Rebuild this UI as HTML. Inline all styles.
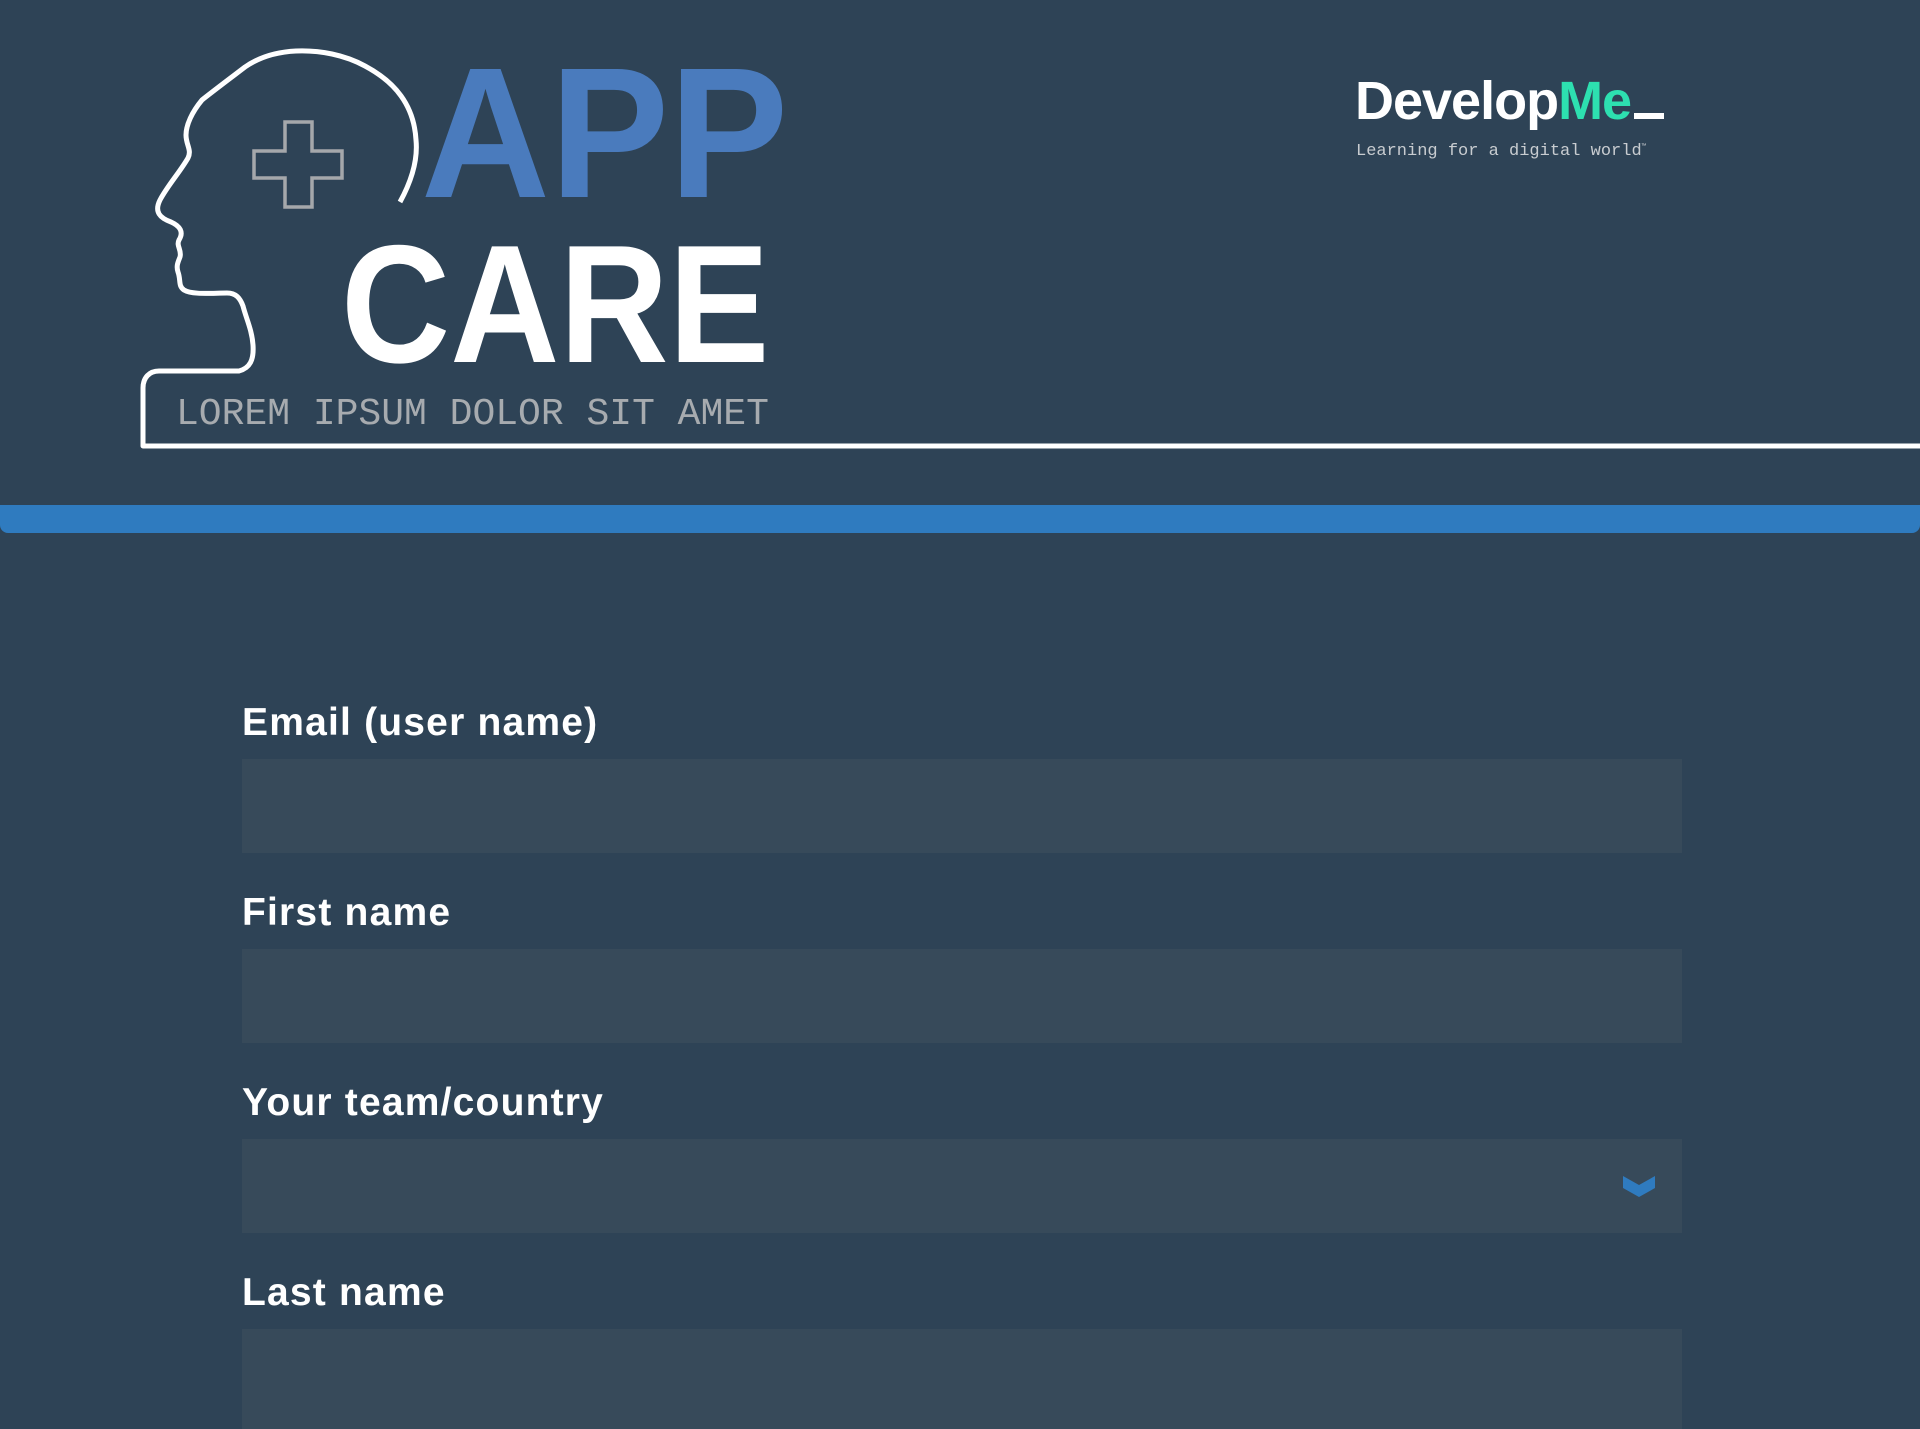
<!DOCTYPE html>
<html><head><meta charset="utf-8"><style>
*{margin:0;padding:0;box-sizing:border-box}
html,body{width:1920px;height:1419px;overflow:hidden;background:#2e4356;font-family:"Liberation Sans",sans-serif}
.abs{position:absolute}
.big{font-weight:bold;line-height:1;transform-origin:0 0;white-space:nowrap}
label{position:absolute;left:242px;color:#fff;font-weight:bold;font-size:39px;letter-spacing:1.2px;line-height:1}
.inp{position:absolute;left:242px;width:1440px;height:94px;background:#374a5a}
</style></head><body>
<svg class="abs" style="left:0;top:0" width="1920" height="460">
<path d="M400 202 C412 180 418 160 416 140 C414 105 395 82 365 66 C345 55 320 50 296 51 C275 52 258 58 245 67 C228 80 212 92 202 100 C192 112 186 125 186 135 C186 145 192 150 188 158 C180 172 168 185 160 200 C154 212 160 218 171 222 C180 226 184 232 179 240 C176 246 182 250 180 257 C178 262 176 266 178 272 C181 280 178 286 184 290 C192 295 212 293 227 293 C236 293 240 298 243 306 C246 318 252 330 253 345 C254 360 250 368 239 371 L159 371 C149 371 143 378 143 388 L143 446 L1920 446" fill="none" stroke="#fff" stroke-width="5" stroke-linejoin="round"/>
<path d="M285 122 H312 V151 H342 V178 H312 V207 H285 V178 H254 V151 H285 Z" fill="none" stroke="#a5a8ab" stroke-width="3.5"/>
</svg>
<div class="abs big" style="left:421px;top:41px;font-size:186px;color:#4a7bbd;transform:scaleX(0.96)">APP</div>
<div class="abs big" style="left:341px;top:220px;font-size:168px;color:#fff;transform:scaleX(0.9)">CARE</div>
<div class="abs" style="left:176px;top:396px;font-family:'Liberation Mono',monospace;font-size:38px;color:#a7abaf;white-space:nowrap;line-height:1">LOREM IPSUM DOLOR SIT AMET</div>
<div class="abs" style="left:1355px;top:74px;font-size:54px;font-weight:bold;color:#fff;letter-spacing:-1px;line-height:1;white-space:nowrap">Develop<span style="color:#2de0b0">Me</span><span style="display:inline-block;width:30px;height:6px;background:#fff;vertical-align:baseline;margin-left:3px"></span></div>
<div class="abs" style="left:1356px;top:143px;font-family:'Liberation Mono',monospace;font-size:17px;color:#c8ccd0;white-space:nowrap;line-height:1">Learning for a digital world<sup style="font-size:7px">™</sup></div>
<div class="abs" style="left:0;top:505px;width:1920px;height:28px;background:#2f7bbf;border-radius:0 0 8px 8px"></div>
<label style="top:703px">Email (user name)</label>
<div class="inp" style="top:759px"></div>
<label style="top:893px">First name</label>
<div class="inp" style="top:949px"></div>
<label style="top:1083px">Your team/country</label>
<div class="inp" style="top:1139px"></div>
<svg class="abs" style="left:1622px;top:1175px" width="34" height="24"><path d="M1 1 L17 10 L33 1 L33 13 L17 22 L1 13 Z" fill="#2f7bbf"/></svg>
<label style="top:1273px">Last name</label>
<div class="inp" style="top:1329px;height:100px"></div>
</body></html>
